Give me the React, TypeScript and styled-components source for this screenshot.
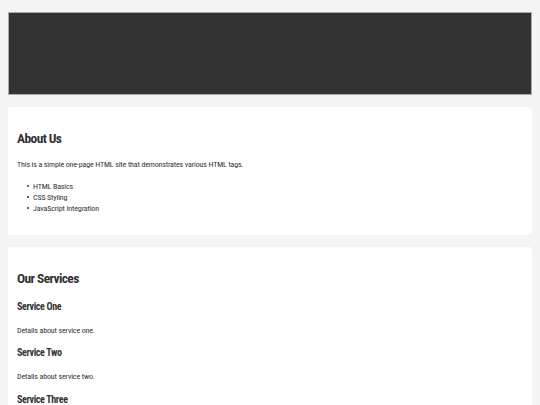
import React from 'react'
import styled, { createGlobalStyle } from 'styled-components'

const GlobalStyle = createGlobalStyle`
  html, body {
    margin: 0;
    padding: 0;
    background: #f4f4f4;
  }
  body {
    font-family: "Roboto Condensed", Roboto, "Liberation Sans", Arial, sans-serif;
    font-stretch: condensed;
    color: #333;
  }
`

const Page = styled.div`
  display: flex;
  flex-direction: column;
  gap: 12px;
  padding: 12px 8px;
`

const Header = styled.header`
  height: 81px;
  background: #333;
  border: 1px solid #aaa;
`

const Card = styled.section`
  background: #fff;
  border-radius: 3px;
  padding: 23px 9px 21px;
`

const Title = styled.h2`
  margin: 0 0 13px;
  font-size: 13.5px;
  line-height: 17px;
  font-weight: bold;
  letter-spacing: -0.6px;
`

const SubTitle = styled.h3`
  margin: 10px 0 0;
  font-size: 10px;
  line-height: 13px;
  font-weight: bold;
  letter-spacing: -0.35px;
`

const Text = styled.p`
  margin: 0;
  font-size: 8px;
  line-height: 10.5px;
  letter-spacing: -0.15px;
`

const Detail = styled(Text)`
  margin-top: 13px;
`

const List = styled.ul`
  margin: 10px 0 0;
  padding-left: 16px;
  list-style: none;
  font-size: 8px;
  line-height: 11px;
  letter-spacing: -0.15px;
`

const Item = styled.li`
  &::before {
    content: '';
    display: inline-block;
    width: 2px;
    height: 2px;
    margin: 0 4px 0 -6px;
    border-radius: 50%;
    background: #333;
    vertical-align: middle;
  }
`

const services = [
  { name: 'Service One', text: 'Details about service one.' },
  { name: 'Service Two', text: 'Details about service two.' },
  { name: 'Service Three', text: 'Details about service three.' },
]

const App = () => {
  return (
    <>
      <GlobalStyle />
      <Page>
        <Header />
        <Card>
          <Title>About Us</Title>
          <Text>This is a simple one-page HTML site that demonstrates various HTML tags.</Text>
          <List>
            <Item>HTML Basics</Item>
            <Item>CSS Styling</Item>
            <Item>JavaScript Integration</Item>
          </List>
        </Card>
        <Card>
          <Title>Our Services</Title>
          {services.map((s) => (
            <div key={s.name}>
              <SubTitle>{s.name}</SubTitle>
              <Detail>{s.text}</Detail>
            </div>
          ))}
        </Card>
      </Page>
    </>
  )
}

export default App
